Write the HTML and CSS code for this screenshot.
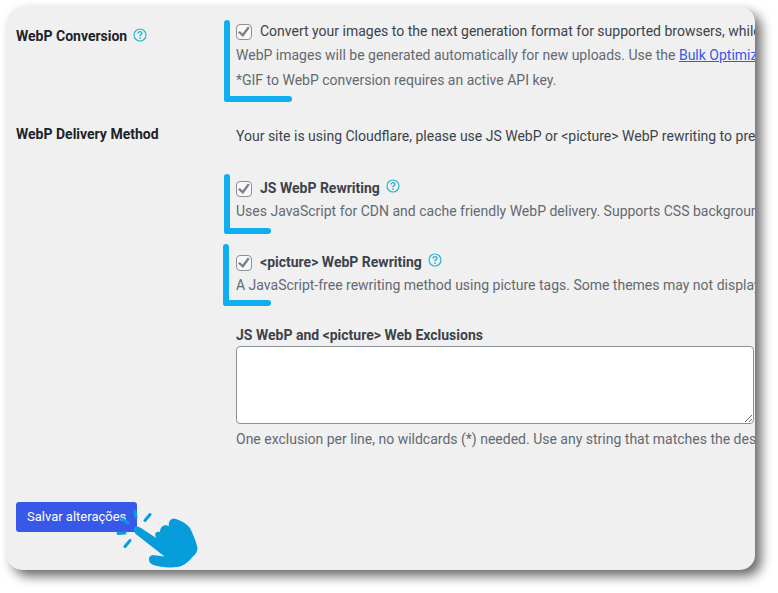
FILE: index.html
```
<!DOCTYPE html>
<html lang="en">
<head>
<meta charset="utf-8">
<title>WebP Settings</title>
<link rel="stylesheet" href="styles.css">
</head>
<body>
<svg class="defs" aria-hidden="true">
  <symbol id="help" viewBox="0 0 14 14">
    <circle cx="7" cy="7" r="6" fill="none" stroke="currentColor" stroke-width="1.2"/>
    <path d="M5.100 5.500C5.100 4.200 6 3.600 7 3.600s1.900.7 1.900 1.700C8.900 6.500 7 6.700 7 8.300" fill="none" stroke="currentColor" stroke-width="1.4"/>
    <circle cx="7" cy="10.100" r=".9" fill="currentColor"/>
  </symbol>
</svg>
<form class="card">
  <div class="setting">
    <div class="name">WebP Conversion <a class="help" href="#" aria-label="Help"><svg><use href="#help"/></svg></a></div>
    <div class="field">
      <div class="marked marked-wide">
        <div class="option"><input type="checkbox" id="webp" checked><label for="webp">Convert your images to the next generation format for supported browsers, while</label></div>
        <p class="hint">WebP images will be generated automatically for new uploads. Use the <a href="#">Bulk Optimizer</a></p>
        <p class="hint">*GIF to WebP conversion requires an active API key.</p>
      </div>
    </div>
  </div>
  <div class="setting">
    <div class="name">WebP Delivery Method</div>
    <div class="field">
      <p class="notice">Your site is using Cloudflare, please use JS WebP or &lt;picture&gt; WebP rewriting to prevent</p>
      <div class="marked marked-js">
        <div class="option strong"><input type="checkbox" id="js" checked><label for="js">JS WebP Rewriting</label><a class="help" href="#" aria-label="Help"><svg><use href="#help"/></svg></a></div>
        <p class="hint">Uses JavaScript for CDN and cache friendly WebP delivery. Supports CSS background</p>
      </div>
      <div class="marked marked-picture">
        <div class="option strong"><input type="checkbox" id="picture" checked><label for="picture">&lt;picture&gt; WebP Rewriting</label><a class="help" href="#" aria-label="Help"><svg><use href="#help"/></svg></a></div>
        <p class="hint">A JavaScript-free rewriting method using picture tags. Some themes may not display</p>
      </div>
      <div class="exclusions">
        <label for="exclude">JS WebP and &lt;picture&gt; Web Exclusions</label>
        <textarea id="exclude"></textarea>
        <p class="hint">One exclusion per line, no wildcards (*) needed. Use any string that matches the desired</p>
      </div>
    </div>
  </div>
  <div class="actions">
    <button type="submit">Salvar alterações</button>
    <svg class="pointer" viewBox="0 0 86 60" aria-hidden="true">
      <g fill="none" stroke="#079ddb" stroke-width="3" stroke-linecap="round">
        <path d="M21 3l1 6M36 6.500l-5 6M8 11l6 4M4 25.500l7-.5M16 32.500l-5 6"/>
      </g>
      <path fill="#079ddb" d="M21 19c2-1 4 0 6 1l15 10c-2-5 0-7 4-6 0-5 4-8 9-6-1-5 3-9 7-7 6 2 11 5 14 9 3 6 6 13 7.500 20 0 4-2 6-5 9-4 5-9 9-15 10-9 1-18 0-24-2-6-2-6-9-1-10l12 1.500L23 27c-3-2-4-6-2-8z"/>
    </svg>
  </div>
</form>
</body>
</html>
```
FILE: styles.css
```
* {
  box-sizing: border-box;
}

body {
  margin: 0;
  padding: 7px 23px 23px 7px;
  background: #fff;
  font: 14px/22px Roboto, "Liberation Sans", sans-serif;
  color: #3c434a;
}

.defs {
  position: absolute;
  width: 0;
  height: 0;
}

p {
  margin: 0;
}

.card {
  padding: 13px 0 38px 9px;
  overflow: hidden;
  background: #f0f0f0;
  border-radius: 15px;
  box-shadow: 6px 6px 12px rgb(0 0 0 / 60%);
}

.setting {
  display: grid;
  grid-template-columns: 208px minmax(0, 1fr);
}

.setting + .setting {
  margin-top: 20px;
}

.name {
  padding-top: 5px;
  font-weight: 700;
  color: #1d2327;
}

.setting + .setting .name {
  padding-top: 1px;
}

.marked {
  position: relative;
  padding: 0 0 10px 12px;
  white-space: nowrap;
}

.marked::before,
.marked::after {
  content: "";
  position: absolute;
  left: 0;
  bottom: 0;
  border-radius: 3px;
  background: #0eaeef;
}

.marked::before {
  top: 0;
  width: 6px;
}

.marked::after {
  width: 47px;
  height: 6px;
}

.marked-wide {
  padding-bottom: 9px;
}

.marked-wide .option {
  margin-bottom: 1px;
}

.marked-wide::after {
  width: 68px;
}

.marked-js {
  margin-top: 25px;
  padding-top: 3px;
}

.marked-picture {
  margin: 10px 0 0 -1px;
  padding: 7px 0 8px 13px;
}

.marked-picture::after {
  width: 48px;
}

.option {
  display: flex;
  align-items: center;
}

.strong,
.exclusions label {
  font-weight: 700;
}

.option input {
  appearance: none;
  flex: none;
  width: 16px;
  height: 16px;
  margin: 2px 8px 0 0;
  border: 1px solid #8c8f94;
  border-radius: 4px;
  background: #f8f8f8;
}

.option input:checked::before {
  content: "";
  display: block;
  width: 12px;
  height: 12px;
  margin: 1px;
  background: #76818e;
  clip-path: polygon(0 55%, 15% 42%, 38% 63%, 82% 4%, 98% 15%, 42% 92%);
}

.help {
  color: #2bb3cf;
}

.help svg {
  display: inline-block;
  width: 14px;
  height: 14px;
  margin-left: 2px;
  vertical-align: -1px;
}

.option .help {
  height: 22px;
  margin-left: 4px;
}

.option .help svg {
  vertical-align: 0;
}

.hint {
  line-height: 25px;
  color: #646970;
  white-space: nowrap;
}

.hint a {
  color: #3858e9;
}

.notice {
  padding: 2px 0 0 12px;
  line-height: 25px;
  white-space: nowrap;
}

.exclusions {
  margin-top: 18px;
  padding-left: 12px;
}

.exclusions label {
  display: block;
}

.exclusions textarea {
  display: block;
  width: calc(100% - 1px);
  height: 78px;
  margin-bottom: 3px;
  border: 1px solid #8c8f94;
  border-radius: 4px;
  background: #fff;
  resize: vertical;
}

.actions {
  position: relative;
  margin-top: 50px;
}

.actions button {
  display: block;
  height: 30px;
  padding: 0 11px;
  border: 0;
  border-radius: 3px;
  background: #3858e9;
  color: #fff;
  font: 13px/30px Roboto, "Liberation Sans", sans-serif;
}

.pointer {
  position: absolute;
  top: 6px;
  left: 98px;
  width: 86px;
  height: 60px;
}
```
